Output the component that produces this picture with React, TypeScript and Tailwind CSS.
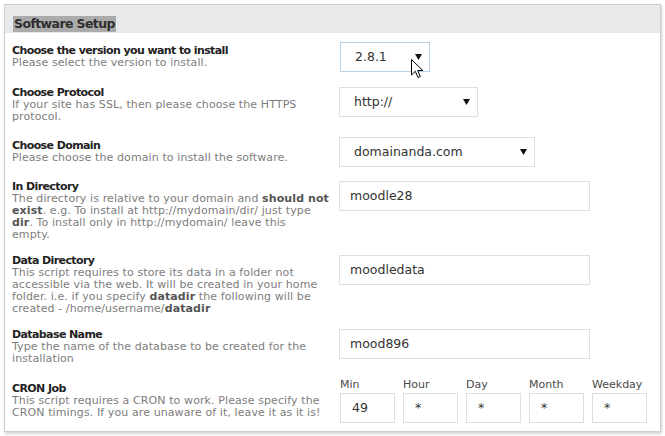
import React from 'react';

interface FieldRowProps {
  label: string;
  children: React.ReactNode;
  control: React.ReactNode;
  align?: 'start' | 'center';
  last?: boolean;
  first?: boolean;
}

const FieldRow: React.FC<FieldRowProps> = ({ label, children, control, align = 'start', first, last }) => (
  <div
    className={`flex ${align === 'center' ? 'items-center' : 'items-start'} ${
      first ? 'pb-[15px]' : last ? 'pb-[8px]' : 'pb-[14px]'
    }`}
  >
    <div className="w-[334px] shrink-0 pl-[7px] text-[11px] leading-[12px]">
      <div className="font-bold text-[#222] tracking-[-0.6px] whitespace-nowrap">{label}</div>
      <div className="text-[#7d7d7d] tracking-[0.1px] whitespace-nowrap">{children}</div>
    </div>
    <div>{control}</div>
  </div>
);

const Arrow = () => (
  <svg width="7" height="6" viewBox="0 0 7 6" className="shrink-0">
    <polygon points="0,0 7,0 3.5,6" fill="#111" />
  </svg>
);

const FakeSelect: React.FC<{ value: string; className: string; cursor?: boolean }> = ({ value, className, cursor }) => (
  <div className={`relative flex items-center justify-between h-[30px] border bg-white pl-[14px] pr-[7px] text-[12.5px] text-[#333] ${className}`}>
    <span>{value}</span>
    <Arrow />
    {cursor && (
      // mouse pointer hovering the version select
      <svg width="13" height="20" viewBox="0 0 13 20" className="absolute left-[70px] top-[16px]">
        <path d="M0.5 0.5 L0.5 16 L4.3 12.3 L7 18.5 L9.3 17.5 L6.7 11.5 L11.8 11.5 Z" fill="#fff" stroke="#000" strokeWidth="1" strokeLinejoin="round" />
      </svg>
    )}
  </div>
);

const TextBox: React.FC<{ value: string }> = ({ value }) => (
  <div className="flex items-center w-[251px] h-[30px] border border-[#dfdfdf] bg-white pl-[10px] text-[12.5px] text-[#333]">
    {value}
  </div>
);

const cronFields = [
  { name: 'Min', value: '49' },
  { name: 'Hour', value: '*' },
  { name: 'Day', value: '*' },
  { name: 'Month', value: '*' },
  { name: 'Weekday', value: '*' },
];

const B: React.FC<{ children: React.ReactNode }> = ({ children }) => (
  <span className="font-bold text-[#555]">{children}</span>
);

export default function App() {
  return (
    <div className="min-h-[436px] bg-white p-[4px] font-['DejaVu_Sans',Verdana,sans-serif]">
      <div className="w-[657px] border border-[#cdcdcd] bg-white shadow-[1px_2px_3px_rgba(0,0,0,0.18)]">
        {/* Header */}
        <div className="h-[28px] bg-[#e8e9ea] pl-[8px] pt-[6px]">
          <span className="inline-block bg-[#ababab] px-[1px] text-[12.5px] leading-[16px] font-bold tracking-[-0.6px] text-[#2e2e2e]">
            Software Setup
          </span>
        </div>

        {/* Fields */}
        <div className="pt-[9px]">
          <FieldRow
            first
            align="center"
            label="Choose the version you want to install"
            control={<FakeSelect value="2.8.1" className="ml-px w-[90px] border-[#b5d2ec]" cursor />}
          >
            Please select the version to install.
          </FieldRow>

          <FieldRow
            label="Choose Protocol"
            control={<FakeSelect value="http://" className="w-[139px] border-[#dfdfdf]" />}
          >
            If your site has SSL, then please choose the HTTPS
            <br />
            protocol.
          </FieldRow>

          <FieldRow
            align="center"
            label="Choose Domain"
            control={<FakeSelect value="domainanda.com" className="w-[196px] border-[#dfdfdf]" />}
          >
            Please choose the domain to install the software.
          </FieldRow>

          <FieldRow label="In Directory" control={<TextBox value="moodle28" />}>
            The directory is relative to your domain and <B>should not</B>
            <br />
            <B>exist</B>. e.g. To install at http://mydomain/dir/ just type
            <br />
            <B>dir</B>. To install only in http://mydomain/ leave this
            <br />
            empty.
          </FieldRow>

          <FieldRow label="Data Directory" control={<TextBox value="moodledata" />}>
            This script requires to store its data in a folder not
            <br />
            accessible via the web. It will be created in your home
            <br />
            folder. i.e. if you specify <B>datadir</B> the following will be
            <br />
            created - /home/username/<B>datadir</B>
          </FieldRow>

          <FieldRow label="Database Name" control={<TextBox value="mood896" />}>
            Type the name of the database to be created for the
            <br />
            installation
          </FieldRow>

          <FieldRow
            last
            align="center"
            label="CRON Job"
            control={
              <div className="flex gap-[8px] pl-px">
                {cronFields.map((f) => (
                  <div key={f.name} className="w-[55px]">
                    <div className="text-[11px] leading-[12px] text-[#4a4a4a] mb-[2px]">{f.name}</div>
                    <div className="flex items-center h-[30px] border border-[#dfdfdf] bg-white pl-[11px] text-[12.5px] text-[#333]">
                      {f.value}
                    </div>
                  </div>
                ))}
              </div>
            }
          >
            This script requires a CRON to work. Please specify the
            <br />
            CRON timings. If you are unaware of it, leave it as it is!
          </FieldRow>
        </div>
      </div>
    </div>
  );
}
